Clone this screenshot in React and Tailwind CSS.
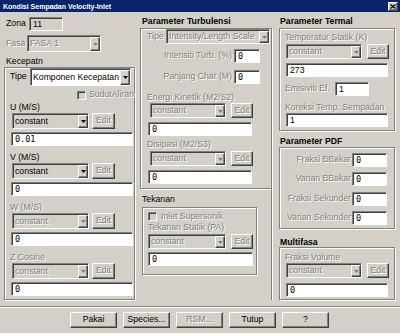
import React from 'react';

const sunken = "border border-t-[#808080] border-l-[#808080] border-b-white border-r-white shadow-[inset_1px_1px_0_#404040]";
const raised = "border border-t-white border-l-white border-b-[#404040] border-r-[#404040] shadow-[inset_-1px_-1px_0_#808080]";
const etched = "border border-[#808080] shadow-[inset_1px_1px_0_#fff,1px_1px_0_#fff]";
const dis = "text-[#808080] [text-shadow:1px_1px_0_#fff]";
const mono = "font-['DejaVu_Sans_Mono',monospace] text-[8.5px]";

function Arrow({ d }) {
  return (
    <svg width="5" height="3" viewBox="0 0 5 3">
      <path d="M0 0h5L2.5 3z" fill={d ? '#808080' : '#000'} />
    </svg>
  );
}

function Combo({ className = '', text, d = true, white = false }) {
  return (
    <div className={`${sunken} ${white ? 'bg-white' : 'bg-[#d4d0c8]'} flex shrink-0 ${className}`}>
      <div className={`flex-1 pl-[2px] pt-px flex items-center whitespace-nowrap overflow-hidden ${d ? dis : 'text-black'}`}>{text}</div>
      <div className={`${raised} w-[10px] mt-px bg-[#d4d0c8] flex items-center justify-center`}>
        <Arrow d={d} />
      </div>
    </div>
  );
}

function Edit({ className = '' }) {
  return (
    <div className={`${raised} bg-[#d4d0c8] flex items-center justify-center shrink-0 ${dis} ${className}`}>Edit</div>
  );
}

function Field({ className = '', children, gray, m }) {
  return (
    <div className={`${sunken} ${gray ? 'bg-[#d4d0c8]' : 'bg-white'} flex items-center pl-[3px] pt-px shrink-0 text-black whitespace-nowrap ${m ? mono : ''} ${className}`}>
      {children}
    </div>
  );
}

function Check() {
  return <div className={`${sunken} w-[9px] h-[9px] bg-[#d4d0c8] shrink-0`} />;
}

function L({ children, className = '' }) {
  return <div className={`h-[10px] leading-[10px] whitespace-nowrap shrink-0 ${className}`}>{children}</div>;
}

export default function App() {
  const sections = [
    ['U (M/S)', false, '0.01'],
    ['V (M/S)', false, '0'],
    ['W (M/S)', true, '0'],
    ['Z Cosine', true, '0'],
  ];
  return (
    <div className="w-[400px] h-[333px] bg-[#d4d0c8] flex flex-col overflow-hidden font-['Liberation_Sans',Arial,sans-serif] text-[8.7px] text-black">
      {/* title bar */}
      <div className="h-[12px] bg-[#0a246a] flex items-center justify-between pl-[3px] pr-[2px] shrink-0">
        <span className="text-white font-bold text-[7px] leading-none">Kondisi Sempadan Velocity-Inlet</span>
        <div className={`${raised} w-[10px] h-[9px] bg-[#d4d0c8] flex items-center justify-center`}>
          <svg width="6" height="5" viewBox="0 0 6 5">
            <path d="M0.5 0.5L5.5 4.5M5.5 0.5L0.5 4.5" stroke="#000" strokeWidth="1.2" />
          </svg>
        </div>
      </div>

      <div className="h-[288px] flex shrink-0">
        {/* left column */}
        <div className="ml-[4px] w-[131px] flex flex-col">
          <div className="mt-[5px] h-[14px] flex items-center">
            <span className="ml-[2px] w-[23px]">Zona</span>
            <Field gray className="w-[34px] h-[14px]">11</Field>
          </div>
          <div className="mt-[4px] h-[17px] flex items-center">
            <span className={`ml-[2px] w-[21px] ${dis}`}>Fasa</span>
            <Combo className="w-[74px] h-[17px]" text="FASA 1" />
          </div>
          <L className="mt-[4px] ml-[2px]">Kecepatn</L>
          <div className={`${etched} mt-[1px] h-[233px] flex flex-col`}>
            <div className="h-[18px] flex items-center">
              <span className="ml-[5px] w-[20px]">Tipe</span>
              <Combo white d={false} className="w-[101px] h-[18px]" text="Komponen Kecepatan" />
            </div>
            <div className="mt-[4px] h-[10px] flex items-center ml-[72px]">
              <Check />
              <span className={`ml-[3px] ${dis}`}>SudutAliran</span>
            </div>
            {sections.map(([lab, d, v], i) => (
              <React.Fragment key={lab}>
                <L className={`ml-[5px] ${i === 0 ? 'mt-[2px]' : 'mt-[6px]'} ${d ? dis : ''}`}>{lab}</L>
                <div className="mt-[1px] h-[16px] flex ml-[7px] shrink-0">
                  <Combo d={d} className="w-[77px] h-[16px]" text="constant" />
                  <Edit className="ml-[3px] w-[23px] h-[16px]" />
                </div>
                <Field m className="mt-[3px] ml-[6px] w-[122px] h-[14px]">{v}</Field>
              </React.Fragment>
            ))}
          </div>
        </div>

        {/* middle column */}
        <div className="ml-[5px] w-[132px] flex flex-col">
          <L className="mt-[4px] ml-[2px] font-bold">Parameter Turbulensi</L>
          <div className={`${etched} mt-[2px] h-[161px] flex flex-col shrink-0`}>
            <div className="h-[15px] flex items-center shrink-0">
              <span className={`ml-[6px] w-[19px] ${dis}`}>Tipe</span>
              <Combo className="w-[104px] h-[15px]" text="Intensity/Length Scale" />
            </div>
            <div className="mt-[5px] h-[14px] flex items-center shrink-0">
              <span className={`w-[91px] text-right whitespace-nowrap ${dis}`}>Intensiti Turb. (%)</span>
              <Field m className="ml-[2px] w-[26px] h-[14px]">0</Field>
            </div>
            <div className="mt-[7px] h-[14px] flex items-center shrink-0">
              <span className={`w-[91px] text-right whitespace-nowrap ${dis}`}>Panjang Char (M)</span>
              <Field m className="ml-[2px] w-[26px] h-[14px]">0</Field>
            </div>
            <L className={`mt-[8px] ml-[6px] ${dis}`}>Energi Kinetik (M2/S2)</L>
            <div className="mt-[1px] h-[15px] flex ml-[9px] shrink-0">
              <Combo className="w-[76px] h-[15px]" text="constant" />
              <Edit className="ml-[5px] w-[22px] h-[15px]" />
            </div>
            <Field m className="mt-[4px] ml-[7px] w-[104px] h-[14px]">0</Field>
            <L className={`mt-[3px] ml-[6px] ${dis}`}>Disipasi (M2/S3)</L>
            <div className="mt-[2px] h-[15px] flex ml-[9px] shrink-0">
              <Combo className="w-[76px] h-[15px]" text="constant" />
              <Edit className="ml-[5px] w-[22px] h-[15px]" />
            </div>
            <Field m className="mt-[4px] ml-[7px] w-[104px] h-[14px]">0</Field>
          </div>
          <div className="flex-1 flex flex-col border-r border-r-[#808080] shadow-[1px_0_0_#fff]">
            <L className="mt-[5px] ml-[2px]">Tekanan</L>
            <div className={`${etched} mt-[3px] ml-[2px] w-[115px] h-[68px] flex flex-col`}>
              <div className="mt-[4px] h-[9px] flex items-center ml-[5px]">
                <Check />
                <span className={`ml-[4px] ${dis}`}>Inlet Supersonik</span>
              </div>
              <L className={`mt-[1px] ml-[5px] ${dis}`}>Tekanan Statik (PA)</L>
              <div className="mt-[2px] h-[15px] flex ml-[5px] shrink-0">
                <Combo className="w-[78px] h-[15px]" text="constant" />
                <Edit className="ml-[5px] w-[22px] h-[15px]" />
              </div>
              <Field m className="mt-[3px] ml-[5px] w-[105px] h-[14px]">0</Field>
            </div>
          </div>
        </div>

        {/* right column */}
        <div className="ml-[7px] w-[116px] flex flex-col">
          <L className="mt-[4px] ml-[1px] font-bold">Parameter Termal</L>
          <div className={`${etched} mt-[2px] h-[103px] flex flex-col shrink-0`}>
            <L className={`mt-[3px] ml-[5px] ${dis}`}>Temperatur Statik (K)</L>
            <div className="mt-[2px] h-[15px] flex ml-[6px] shrink-0">
              <Combo className="w-[76px] h-[15px]" text="constant" />
              <Edit className="ml-[5px] w-[22px] h-[15px]" />
            </div>
            <Field className="mt-[4px] ml-[6px] w-[102px] h-[14px]">273</Field>
            <div className="mt-[5px] h-[14px] flex items-center shrink-0">
              <span className={`ml-[5px] w-[50px] whitespace-nowrap ${dis}`}>Emisiviti Ef.</span>
              <Field className="w-[34px] h-[14px]">1</Field>
            </div>
            <L className={`mt-[6px] ml-[5px] ${dis}`}>Koreksi Temp. Sempadan</L>
            <Field className="mt-[1px] ml-[6px] w-[102px] h-[14px]">1</Field>
          </div>
          <L className="mt-[5px] ml-[1px] font-bold">Parameter PDF</L>
          <div className={`${etched} mt-[1px] h-[82px] flex flex-col shrink-0`}>
            {['Fraksi BBakar', 'Varian BBakar', 'Fraksi Sekunder', 'Varian Sekunder'].map((t, i) => (
              <div key={t} className={`${i === 2 ? 'mt-[6px]' : 'mt-[5px]'} h-[14px] flex items-center shrink-0`}>
                <span className={`w-[71px] text-right whitespace-nowrap ${dis}`}>{t}</span>
                <Field m className="ml-[1px] w-[35px] h-[14px]">0</Field>
              </div>
            ))}
          </div>
          <L className="mt-[8px] ml-[1px] font-bold">Multifasa</L>
          <div className={`${etched} h-[53px] flex flex-col shrink-0`}>
            <L className={`mt-[4px] ml-[5px] ${dis}`}>Fraksi Volume</L>
            <div className="mt-[1px] h-[15px] flex ml-[6px] shrink-0">
              <Combo className="w-[76px] h-[15px]" text="constant" />
              <Edit className="ml-[5px] w-[22px] h-[15px]" />
            </div>
            <Field m className="mt-[5px] ml-[6px] w-[102px] h-[14px]">0</Field>
          </div>
        </div>
      </div>

      <div className="mt-[6px] h-[2px] border-t border-t-[#808080] border-b border-b-white shrink-0" />

      <div className="mt-[4px] h-[16px] flex gap-[6px] pl-[70px] shrink-0">
        {['Pakai', 'Species...', 'RSM...', 'Tutup', '?'].map((b) => (
          <div key={b} className={`${raised} w-[47px] h-[16px] bg-[#d4d0c8] flex items-center justify-center ${b === 'RSM...' ? dis : 'text-black'}`}>
            {b}
          </div>
        ))}
      </div>
    </div>
  );
}
